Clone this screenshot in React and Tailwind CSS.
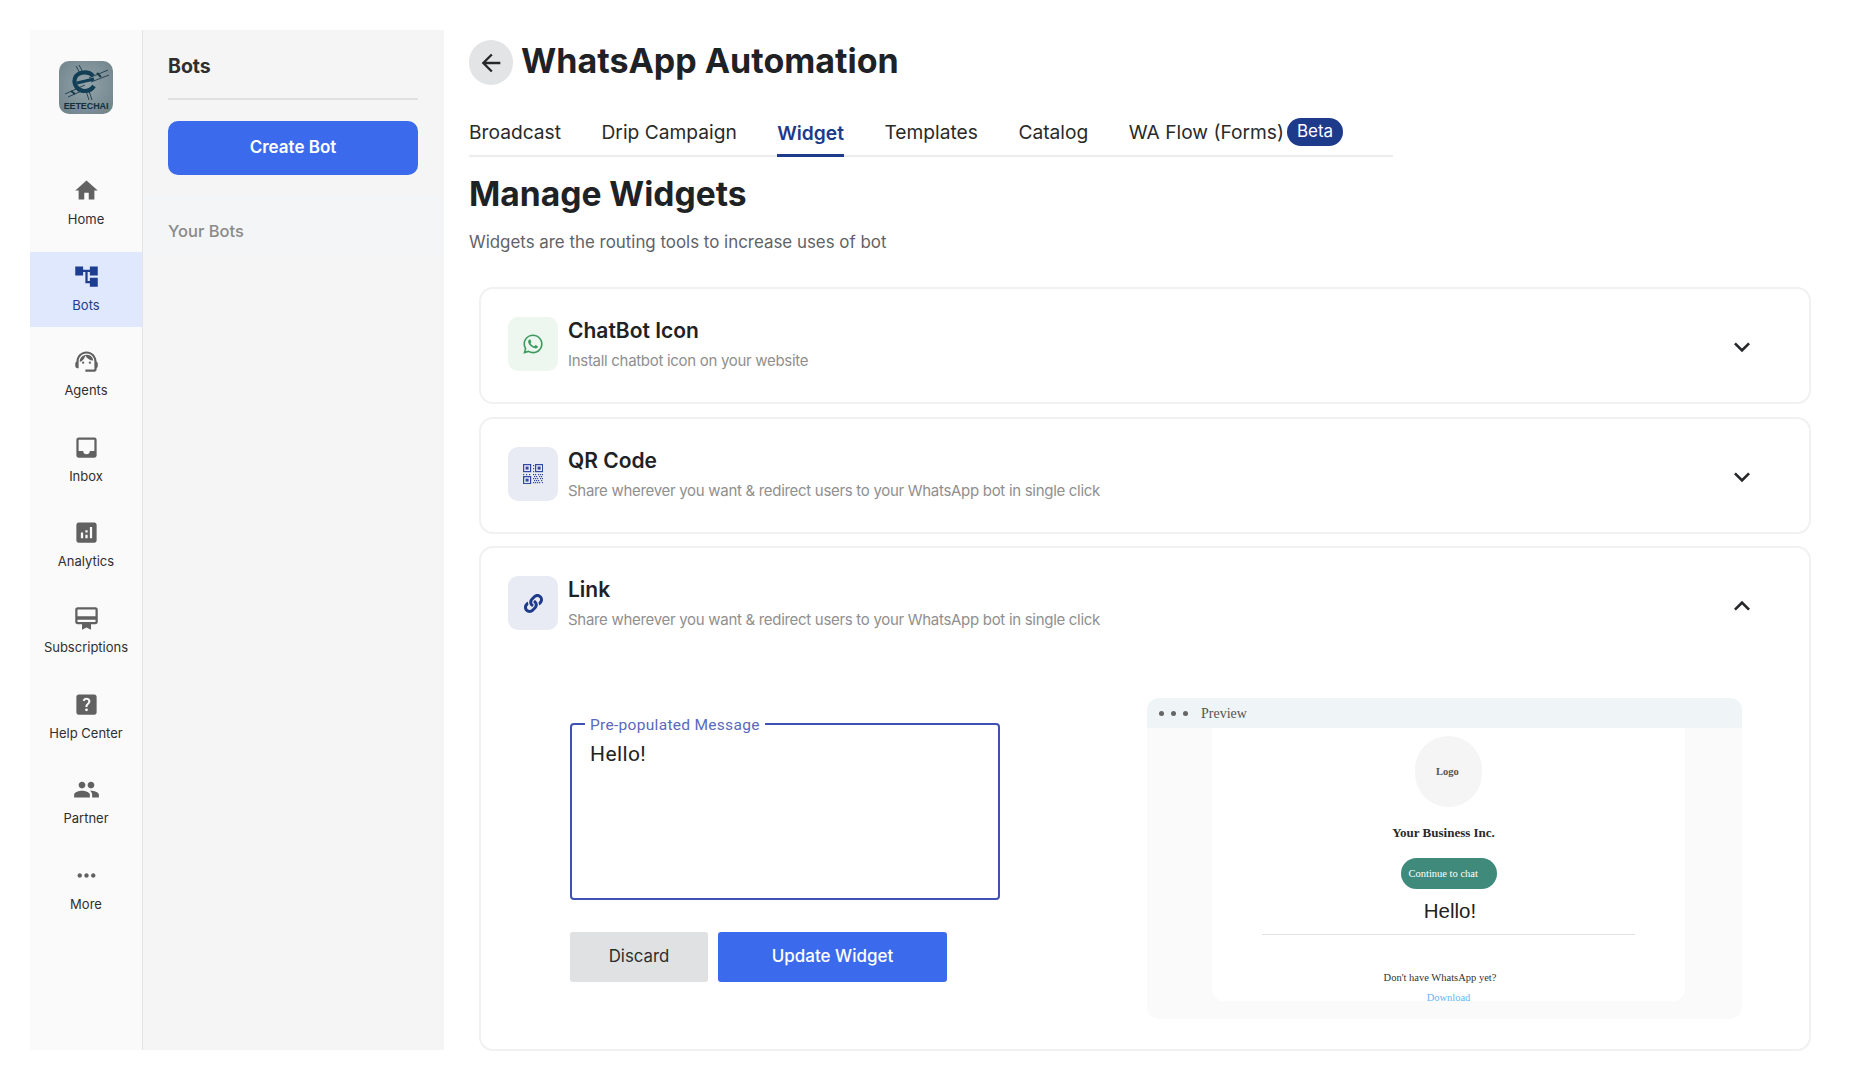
import React from "react";
import {
  MdHome, MdAccountTree, MdOutlineSupportAgent, MdInbox, MdAnalytics, MdCardMembership,
  MdHelpCenter, MdPeople, MdMoreHoriz, MdArrowBack, MdKeyboardArrowDown, MdKeyboardArrowUp,
} from "react-icons/md";
import { FaWhatsapp, FaLink } from "react-icons/fa";

const nav = [
  { label: "Home", Icon: MdHome },
  { label: "Bots", Icon: MdAccountTree, active: true },
  { label: "Agents", Icon: MdOutlineSupportAgent },
  { label: "Inbox", Icon: MdInbox },
  { label: "Analytics", Icon: MdAnalytics },
  { label: "Subscriptions", Icon: MdCardMembership },
  { label: "Help Center", Icon: MdHelpCenter },
  { label: "Partner", Icon: MdPeople },
  { label: "More", Icon: MdMoreHoriz },
];

const tabs = ["Broadcast", "Drip Campaign", "Widget", "Templates", "Catalog"];

function QrIcon() {
  const finder = (x, y) => (
    <g key={`${x}-${y}`}>
      <rect x={x + 0.6} y={y + 0.6} width="7" height="7" fill="none" stroke="currentColor" strokeWidth="1.2" />
      <rect x={x + 2.6} y={y + 2.6} width="3" height="3" fill="currentColor" />
    </g>
  );
  const dots = [
    [10, 10], [12, 10], [15, 10], [17, 10], [19, 10], [11, 12], [13, 12], [16, 12], [18, 12],
    [10, 14], [12, 14], [14, 14], [17, 14], [19, 14], [11, 16], [13, 16], [15, 16], [18, 16],
    [10, 18], [12, 18], [14, 18], [16, 18], [19, 18], [0, 10], [3, 10], [6, 10], [1, 12], [5, 12],
    [10, 1], [10, 4], [10, 7],
  ];
  return (
    <svg viewBox="0 0 20 20" className="h-[20px] w-[20px] text-[#2f4a9e]">
      {finder(0, 0)}
      {finder(12, 0)}
      {finder(0, 12)}
      {dots.map(([x, y]) => (
        <rect key={`${x}_${y}`} x={x} y={y} width="1.200" height="1.200" fill="currentColor" />
      ))}
    </svg>
  );
}

function Logo() {
  return (
    <div className="flex h-[53px] w-[54px] flex-col items-center overflow-hidden rounded-[10px] bg-[radial-gradient(circle_at_50%_45%,#93a4aa,#6e8088)]">
      <svg viewBox="0 0 54 42" className="h-[42px] w-[54px] shrink-0" fill="none">
        <g stroke="#1d3a47" strokeWidth="0.900">
          <path d="M6 33 L26 24 M9 36 L25 29 M30 17 L49 9 M32 21 L50 14" />
          <path d="M17 5 L22 14 M20 4 L25 13 M27 30 L30 39 M30 30 L33 39" />
          <path d="M12 30 L16 33 M38 12 L42 16" strokeWidth="2" />
        </g>
        <path d="M34 15 C30 10 19 10 16 17 C14 24 19 30 26 30 C30 30 33 28 35 25" stroke="#123f55" strokeWidth="4.200" />
        <path d="M18 22 L35 18" stroke="#123f55" strokeWidth="3.200" />
      </svg>
      <span className="mt-[-2px] font-['Liberation_Sans'] text-[9px] leading-[10px] font-bold tracking-[-0.1px] text-[#12303d]">EETECHAI</span>
    </div>
  );
}

function Rail() {
  return (
    <aside className="flex w-[113px] shrink-0 flex-col border-r border-[#e4e4e4] bg-[#fafafa]">
      <div className="flex h-[136px] shrink-0 items-start justify-center pt-[31px]">
        <Logo />
      </div>
      <nav className="flex flex-col gap-[10.600px]">
        {nav.map(({ label, Icon, active }) => (
          <div key={label} className={`flex h-[75px] flex-col items-center pt-[11px] ${active ? "bg-[#dfe8fc] text-[#1c3d92]" : "text-[#2f2f2f]"}`}>
            <Icon className={`h-[27px] w-[27px] shrink-0 ${active ? "text-[#1c3d92]" : "text-[#616161]"}`} />
            <span className="mt-[5px] text-[13px] leading-[20px]">{label}</span>
          </div>
        ))}
      </nav>
    </aside>
  );
}

function BotsPanel() {
  return (
    <section className="flex w-[301px] shrink-0 flex-col bg-[#f5f5f5] pr-[26px] pl-[25px]">
      <h2 className="flex h-[70px] shrink-0 items-center border-b-2 border-[#e0e0e0] pt-[5px] text-[19.500px] font-bold text-[#2e2e2e]">Bots</h2>
      <button className="mt-[21px] h-[54px] w-full rounded-[10px] bg-[#3b6bec] text-[17px] font-semibold text-white">Create Bot</button>
      <div className="mt-[21px] -mr-[26px] -ml-[25px] flex h-[62px] items-center bg-[#f4f5f6] px-[25px] pt-[8px] text-[16.500px] font-medium text-[#8a8a8a]">Your Bots</div>
    </section>
  );
}

function Tabs() {
  return (
    <div className="mt-[14px] flex h-[58px] w-[924px] items-stretch gap-[40.500px] border-b-2 border-[#ececec] pt-[10px] text-[19.200px] text-[#2a2a2a]">
      {tabs.map((t) => (
        <div key={t} className={`flex items-center ${t === "Widget" ? "-mb-[2px] border-b-[3px] border-[#1e3a8a] pt-[3px] font-semibold text-[#1e3a8a]" : ""}`}>
          {t}
        </div>
      ))}
      <div className="flex items-center gap-[3px]">
        WA Flow (Forms)
        <span className="flex h-[28px] w-[56px] items-center justify-center rounded-full bg-[#1e3a8a] text-[17px] text-white">Beta</span>
      </div>
    </div>
  );
}

function Card({ title, desc, tint, icon, open, children }) {
  const Chev = open ? MdKeyboardArrowUp : MdKeyboardArrowDown;
  return (
    <div className="rounded-[14px] border-2 border-[#f1f1f1] bg-white">
      <div className="flex h-[113px] items-start pt-[28px] pl-[27px] pr-[51px]">
        <div className={`flex h-[54px] w-[50px] shrink-0 items-center justify-center rounded-[10px] ${tint}`}>{icon}</div>
        <div className="-mt-[1px] ml-[10px] flex-1">
          <div className="text-[21px] leading-[30px] font-semibold text-[#1f2225]">{title}</div>
          <div className="mt-[3px] text-[15px] leading-[24px] tracking-[-0.3px] text-[#8f8f8f]">{desc}</div>
        </div>
        <Chev className="mt-[14px] h-[32px] w-[32px] text-[#26282a]" />
      </div>
      {children}
    </div>
  );
}

function MessageField() {
  return (
    <div className="w-[430px]">
      <div className="relative h-[177px] rounded-[4px] border-2 border-[#3f51b5] px-[18px] pt-[13px]">
        <span className="absolute -top-[10px] left-[13px] bg-white px-[5px] font-['Roboto'] text-[15.500px] leading-[20px] tracking-[0.3px] text-[#5a69bd]">Pre-populated Message</span>
        <span className="font-['Roboto'] text-[21px] leading-[32px] tracking-[0.4px] text-[#222]">Hello!</span>
      </div>
      <div className="mt-[32px] flex gap-[10px]">
        <button className="h-[50px] w-[138px] rounded-[3px] bg-[#e0e1e3] text-[16.800px] text-[#2e2e2e]">Discard</button>
        <button className="h-[50px] w-[229px] rounded-[3px] bg-[#3b6bec] text-[17px] font-medium text-white">Update Widget</button>
      </div>
    </div>
  );
}

function Preview() {
  return (
    <div className="flex h-[321px] w-[595px] flex-col overflow-hidden rounded-[12px] bg-[#fafafa] font-['Liberation_Serif']">
      <div className="flex h-[30px] shrink-0 items-center bg-[#eff4f7] pl-[12px]">
        <span className="flex gap-[7px]">
          <i className="h-[5px] w-[5px] rounded-full bg-[#666]" />
          <i className="h-[5px] w-[5px] rounded-full bg-[#666]" />
          <i className="h-[5px] w-[5px] rounded-full bg-[#666]" />
        </span>
        <span className="ml-[13px] text-[14px] text-[#555]">Preview</span>
      </div>
      <div className="mx-[65px] flex h-[273px] w-[473px] flex-col items-center rounded-b-[12px] bg-white">
        <div className="mt-[8px] flex h-[71px] w-[67px] shrink-0 items-center justify-center rounded-full bg-[#f5f5f5] pr-[2px] text-[10.500px] font-bold text-[#555]">Logo</div>
        <div className="mt-[18px] pr-[10px] text-[13px] leading-[16px] font-bold text-[#2a2a2a]">Your Business Inc.</div>
        <div className="mt-[17px] flex h-[31px] w-[96px] shrink-0 items-center rounded-full bg-[#408a7c] pl-[8px] text-[10.500px] text-white">Continue to chat</div>
        <div className="mt-[9px] pl-[3px] font-['Liberation_Sans'] text-[20.500px] leading-[26px] text-[#222]">Hello!</div>
        <div className="mt-[10px] h-px w-[373px] shrink-0 bg-[#e0e0e0]" />
        <div className="mt-[36px] pr-[17px] text-[10.500px] leading-[13px] text-[#333]">Don't have WhatsApp yet?</div>
        <div className="mt-[7px] text-[10.500px] leading-[13px] text-[#64b5f6]">Download</div>
      </div>
    </div>
  );
}

export default function App() {
  return (
    <div className="flex h-[1080px] w-full bg-white pt-[30px] pb-[30px] pl-[30px] font-['Inter',sans-serif]">
      <Rail />
      <BotsPanel />
      <main className="flex-1 pl-[25px] pr-[55px]">
        <div className="mt-[10px] flex h-[45px] items-center gap-[8px]">
          <button className="flex h-[45px] w-[44px] items-center justify-center rounded-full bg-[#e3e4e6]">
            <MdArrowBack className="h-[28px] w-[28px] text-[#26282a]" />
          </button>
          <h1 className="pb-[4px] text-[34px] leading-[36px] font-bold text-[#1f2225]">WhatsApp Automation</h1>
        </div>
        <Tabs />
        <h2 className="mt-[15px] text-[33.600px] leading-[44px] font-bold text-[#1f2225]">Manage Widgets</h2>
        <p className="mt-[13px] text-[16.900px] leading-[26px] text-[#5f6368]">Widgets are the routing tools to increase uses of bot</p>
        <div className="mt-[32px] ml-[10px] flex flex-col gap-[12.500px]">
          <Card title="ChatBot Icon" desc="Install chatbot icon on your website" tint="bg-[#edf6ef]" icon={<FaWhatsapp className="h-[22px] w-[22px] text-[#3c9a5f]" />} />
          <Card title="QR Code" desc="Share wherever you want & redirect users to your WhatsApp bot in single click" tint="bg-[#e8ebf4]" icon={<QrIcon />} />
          <Card title="Link" desc="Share wherever you want & redirect users to your WhatsApp bot in single click" tint="bg-[#e8ebf4]" open icon={<FaLink className="h-[19px] w-[19px] text-[#1e3a8a]" />}>
            <div className="flex items-start pt-[37px] pb-[30px] pl-[89px]">
              <div className="pt-[25px]"><MessageField /></div>
              <div className="ml-[147px]"><Preview /></div>
            </div>
          </Card>
        </div>
      </main>
    </div>
  );
}
